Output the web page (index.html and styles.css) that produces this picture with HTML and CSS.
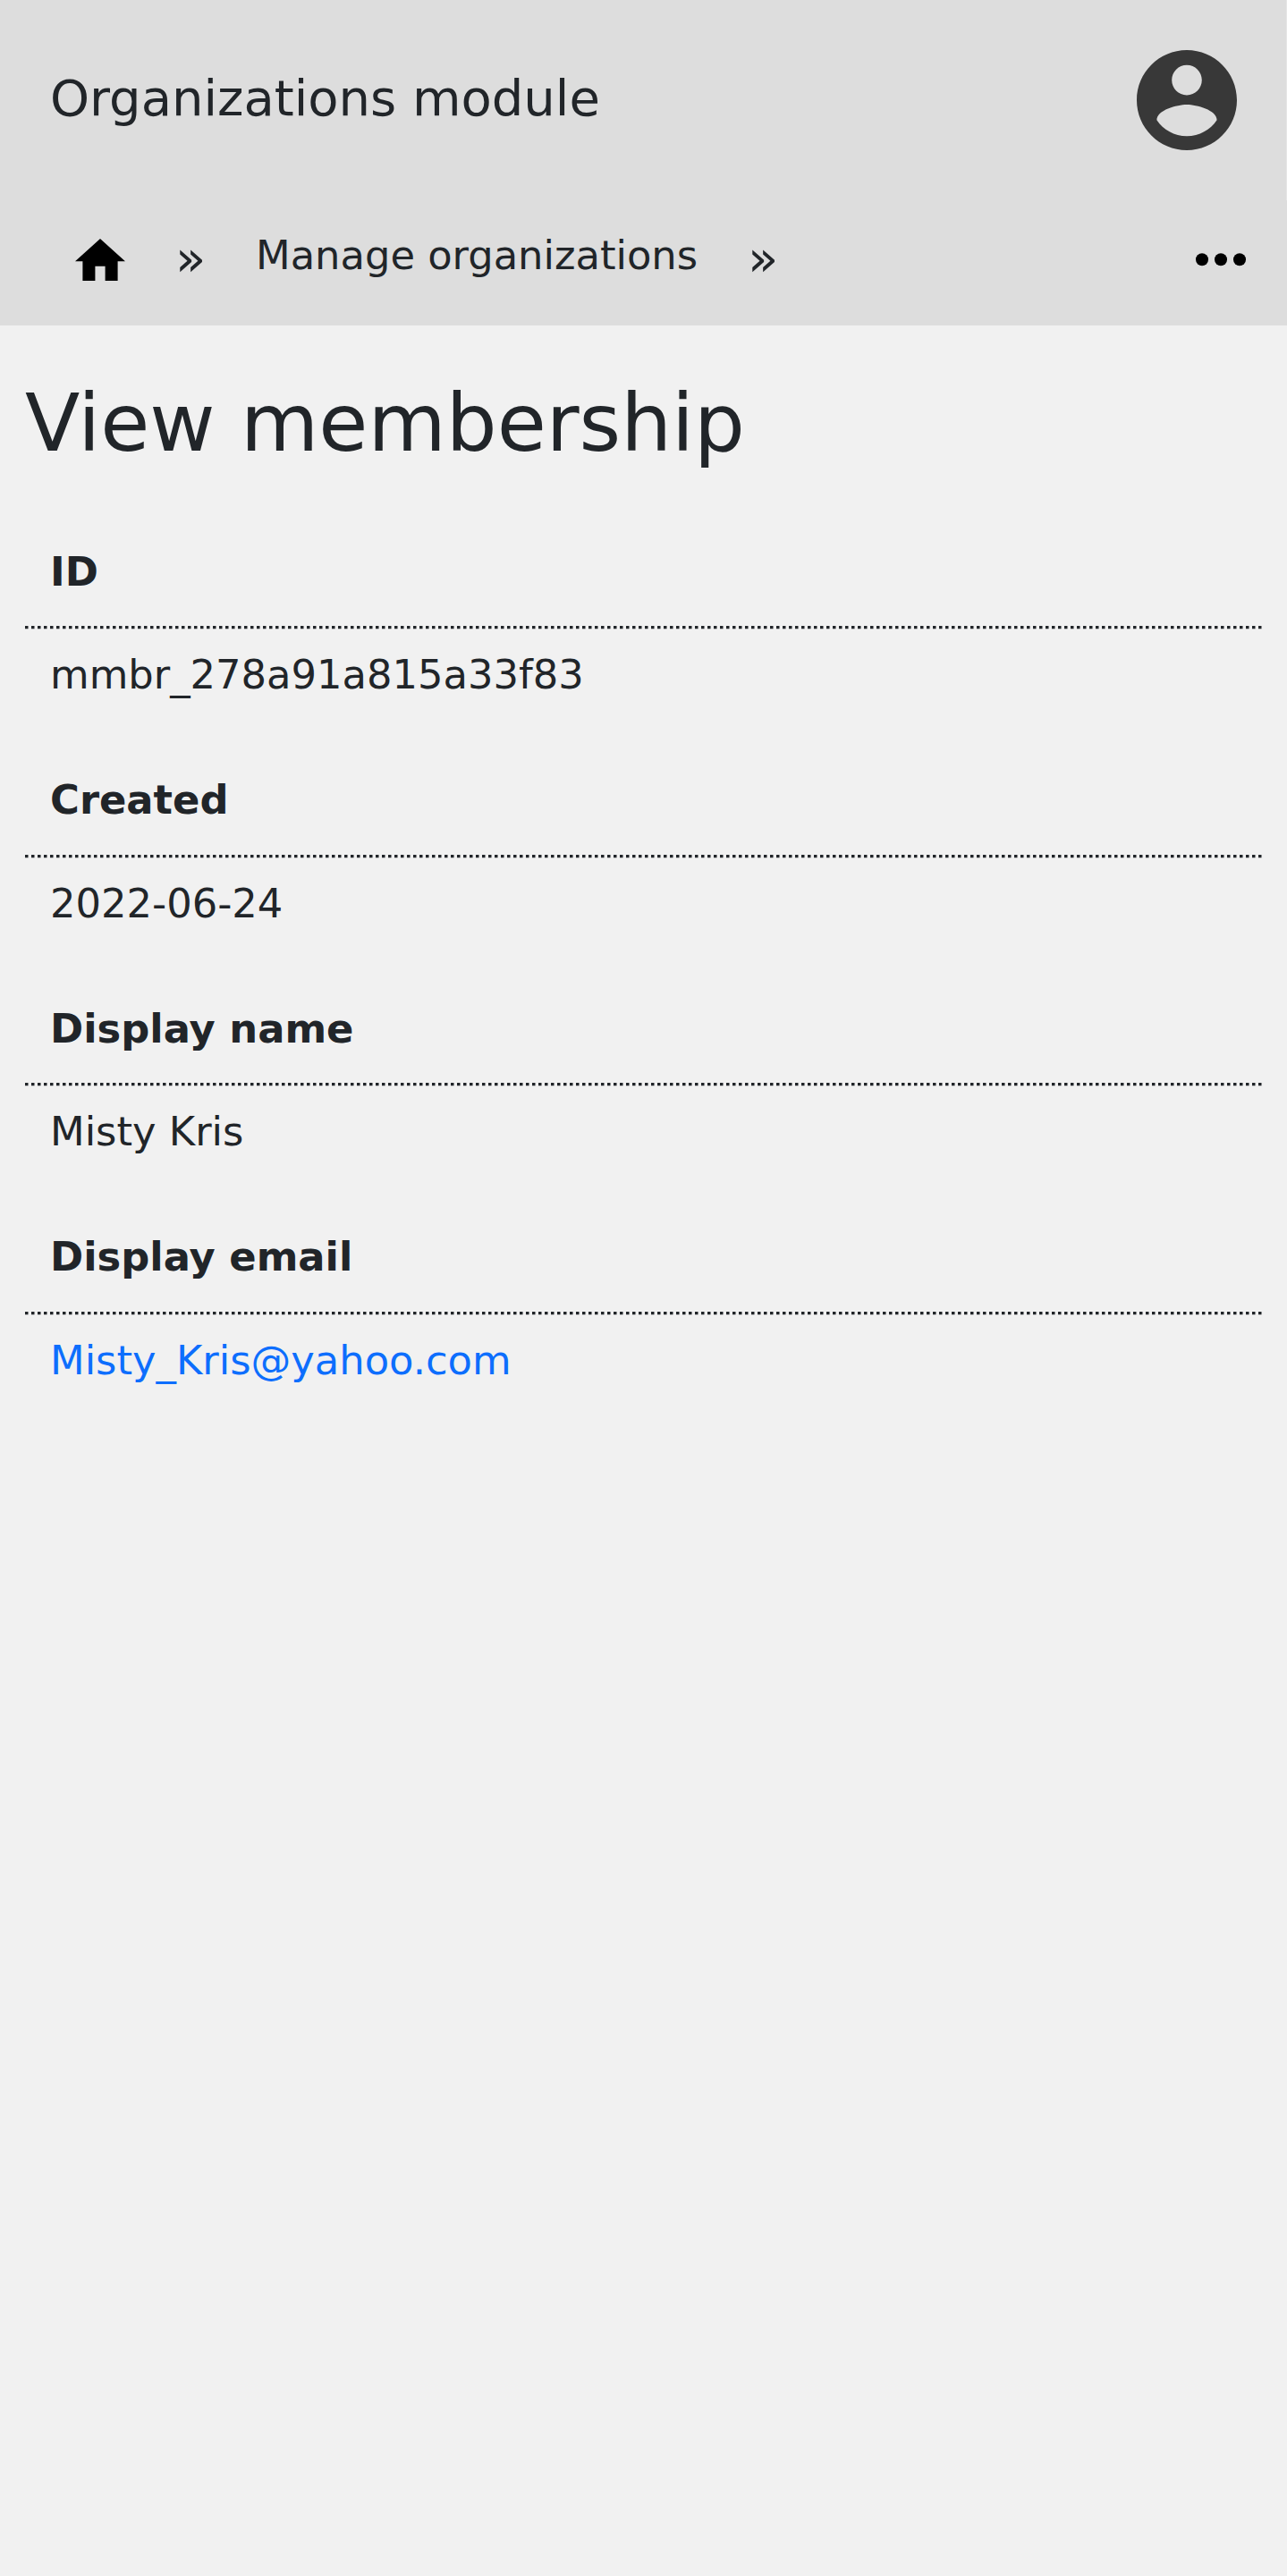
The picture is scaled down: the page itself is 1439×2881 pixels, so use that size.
FILE: index.html
```html
<!DOCTYPE html>
<html lang="en">
<head>
<meta charset="utf-8">
<title>View membership</title>
<link rel="stylesheet" href="styles.css">
</head>
<body>
<header class="header">
  <div class="topbar">
    <span class="brand">Organizations module</span>
    <svg class="avatar" viewBox="2 2 20 20"><path d="M12 2C6.48 2 2 6.48 2 12s4.48 10 10 10 10-4.48 10-10S17.52 2 12 2zm0 3c1.66 0 3 1.34 3 3s-1.34 3-3 3-3-1.34-3-3 1.34-3 3-3zm0 14.2c-2.5 0-4.71-1.28-6-3.22.03-1.99 4-3.08 6-3.08 1.99 0 5.97 1.09 6 3.08-1.29 1.94-3.5 3.22-6 3.22z"/></svg>
  </div>
  <nav class="crumbs">
    <svg class="home" viewBox="2 3 20 17"><path d="M10 20v-6h4v6h5v-8h3L12 3 2 12h3v8z"/></svg>
    <span class="sep">»</span>
    <a class="crumb">Manage organizations</a>
    <span class="sep">»</span>
    <svg class="more" viewBox="4 10 16 4"><circle cx="6" cy="12" r="2"/><circle cx="12" cy="12" r="2"/><circle cx="18" cy="12" r="2"/></svg>
  </nav>
</header>
<main class="main">
  <h1 class="title">View membership</h1>
  <dl class="fields">
    <div class="field">
      <dt class="label">ID</dt>
      <svg class="rule"><line x1="0" y1="1.6" x2="1383" y2="1.6"/></svg>
      <dd class="value">mmbr_278a91a815a33f83</dd>
    </div>
    <div class="field">
      <dt class="label">Created</dt>
      <svg class="rule"><line x1="0" y1="1.6" x2="1383" y2="1.6"/></svg>
      <dd class="value">2022-06-24</dd>
    </div>
    <div class="field">
      <dt class="label">Display name</dt>
      <svg class="rule"><line x1="0" y1="1.6" x2="1383" y2="1.6"/></svg>
      <dd class="value">Misty Kris</dd>
    </div>
    <div class="field">
      <dt class="label">Display email</dt>
      <svg class="rule"><line x1="0" y1="1.6" x2="1383" y2="1.6"/></svg>
      <dd class="value"><a class="link">Misty_Kris@yahoo.com</a></dd>
    </div>
  </dl>
</main>
</body>
</html>
```
FILE: styles.css
```css
* { box-sizing: border-box; }
body {
  margin: 0;
  min-height: 2881px;
  background: #f1f1f1;
  color: #212529;
  font: 44.8px/67.2px "DejaVu Sans", sans-serif;
}
svg { display: block; flex: none; }
.header { background: #ddd; }
.topbar {
  height: 224px;
  padding: 0 55.5px 0 56px;
  border-right: 1px solid #e6e6e6;
  display: flex;
  align-items: center;
  justify-content: space-between;
}
.brand { font-size: 56px; line-height: 84px; margin-bottom: 3.4px; }
.avatar { width: 112px; height: 112px; fill: #383838; }
.crumbs {
  height: 140px;
  padding: 0 46px 0 84px;
  display: flex;
  align-items: flex-start;
}
.home { width: 56px; height: 47.6px; margin-top: 42.7px; }
.sep { width: 34px; margin: 23px 56px 0; font-size: 56px; line-height: 84px; }
.crumb { margin-top: 28px; white-space: nowrap; }
.more { width: 56px; height: 14.6px; margin: 59.2px 0 0 auto; }
.main { padding: 56px 28px 0; }
.title { margin: 0; font-size: 89.6px; line-height: 107.5px; font-weight: 400; }
.fields { margin: 78.1px 0 0; }
.field { height: 255.5px; }
.label { padding: 0 28px 27.4px; font-weight: 700; }
.rule { width: 1383px; height: 4px; }
.rule line { stroke: #212529; stroke-width: 3.2; stroke-dasharray: 3.5 3.5; }
.value { margin: 17px 28px 0; }
.link { color: #0d6efd; }
```
